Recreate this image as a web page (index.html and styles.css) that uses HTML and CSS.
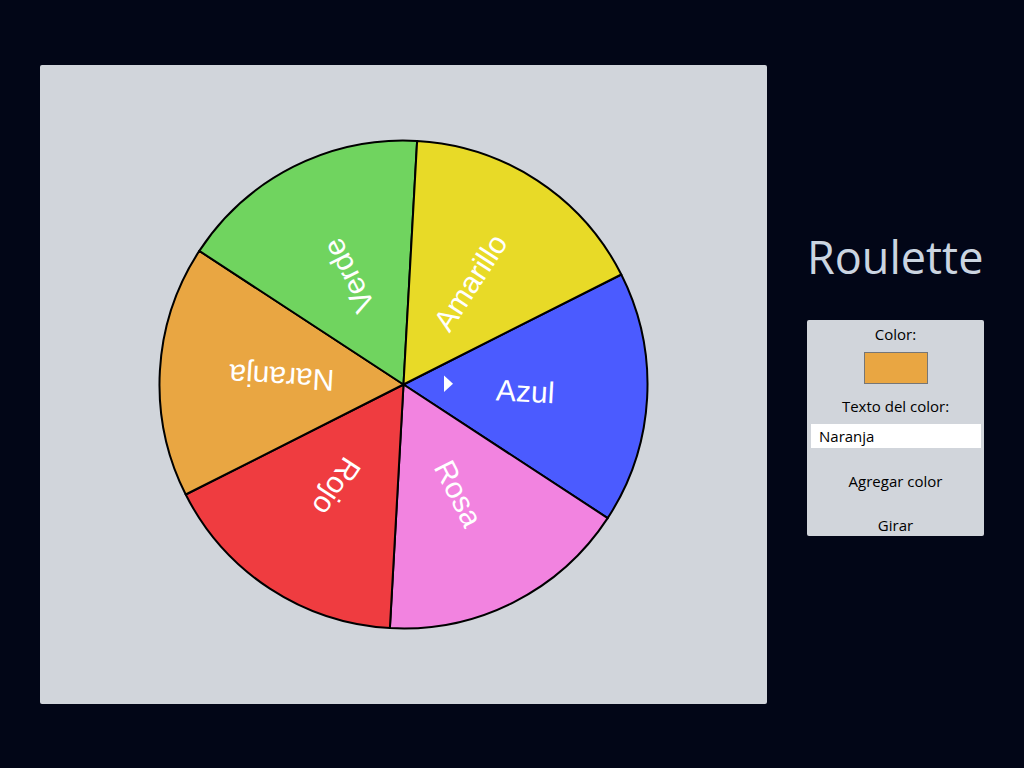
FILE: index.html
```html
<!DOCTYPE html>
<html lang="es">
<head>
<meta charset="utf-8">
<title>Roulette</title>
<link rel="stylesheet" href="styles.css">
</head>
<body>
<main class="app">
  <div class="board">
    <svg class="wheel" width="727" height="639" viewBox="0 0 727 639">
      <g transform="translate(363.5 319.5) rotate(-86.8)">
        <g class="seg" transform="rotate(60)"><path fill="#4b5bff" d="M0 0 L244 0 A244 244 0 0 1 122 211.31 Z"/></g>
        <g class="seg" transform="rotate(120)"><path fill="#f283e0" d="M0 0 L244 0 A244 244 0 0 1 122 211.31 Z"/></g>
        <g class="seg" transform="rotate(180)"><path fill="#ef3c40" d="M0 0 L244 0 A244 244 0 0 1 122 211.31 Z"/></g>
        <g class="seg" transform="rotate(240)"><path fill="#e9a642" d="M0 0 L244 0 A244 244 0 0 1 122 211.31 Z"/></g>
        <g class="seg" transform="rotate(300)"><path fill="#70d45f" d="M0 0 L244 0 A244 244 0 0 1 122 211.31 Z"/></g>
        <g class="seg" transform="rotate(0)"><path fill="#e8da27" d="M0 0 L244 0 A244 244 0 0 1 122 211.31 Z"/></g>
      </g>
      <g transform="translate(363.5 319.5)" class="labels">
        <text transform="rotate(3.2) translate(122 0)">Azul</text>
        <text transform="rotate(63.2) translate(122 0)">Rosa</text>
        <text transform="rotate(123.2) translate(122 0)">Rojo</text>
        <text transform="rotate(183.2) translate(122 0)">Naranja</text>
        <text transform="rotate(243.2) translate(122 0)">Verde</text>
        <text transform="rotate(303.2) translate(122 0)">Amarillo</text>
      </g>
      <polygon class="pointer" points="404,310.5 404,327 413,318.75"/>
    </svg>
  </div>
  <aside class="side">
    <h1 class="title">Roulette</h1>
    <form class="controls">
      <label class="lbl" for="color">Color:</label>
      <span class="swatch" id="color"></span>
      <label class="lbl" for="texto">Texto del color:</label>
      <input class="text-input" id="texto" type="text" value="Naranja">
      <button class="btn" type="button">Agregar color</button>
      <button class="btn" type="button">Girar</button>
    </form>
  </aside>
</main>
</body>
</html>
```
FILE: styles.css
```css
html, body {
  margin: 0;
  padding: 0;
  background: #020617;
}
body {
  width: 1024px;
  height: 768px;
  overflow: hidden;
  font-family: "Open Sans", "Noto Sans", sans-serif;
}
.app {
  display: flex;
  align-items: center;
  gap: 40px;
  padding: 0 40px;
  height: 768px;
  box-sizing: border-box;
}
.board {
  width: 727px;
  height: 639px;
  background: #d1d5db;
  border-radius: 2px;
  flex: none;
}
.wheel {
  display: block;
}
.seg path {
  stroke: #000;
  stroke-width: 2;
  stroke-linejoin: round;
}
.labels text {
  font-family: "Liberation Sans", Arial, sans-serif;
  font-size: 30px;
  fill: #fff;
  text-anchor: middle;
  dominant-baseline: central;
}
.pointer {
  fill: #fff;
}
.side {
  width: 177px;
  flex: none;
  display: flex;
  flex-direction: column;
}
.title {
  margin: 0 0 39px 0;
  font-weight: 400;
  font-size: 45px;
  line-height: 49px;
  color: #cbd5e1;
  text-align: left;
  white-space: nowrap;
}
.controls {
  background: #d1d5db;
  border-radius: 2px;
  display: flex;
  flex-direction: column;
  align-items: center;
  padding: 4px 3px 0;
  height: 216px;
  box-sizing: border-box;
  margin: 0;
}
.lbl {
  font-size: 15px;
  line-height: 20px;
  color: #000;
}
.swatch {
  display: block;
  width: 62px;
  height: 30px;
  background: #e9a642;
  border: 1px solid #767676;
  margin: 8px 0 12px;
}
.text-input {
  align-self: stretch;
  margin: 8px 0 0 1px;
  height: 24px;
  border: none;
  background: #fff;
  font-family: "Open Sans", "Noto Sans", sans-serif;
  font-size: 15px;
  padding: 0 8px;
  color: #000;
  box-sizing: border-box;
  outline: none;
}
.btn {
  background: transparent;
  border: none;
  font-family: "Open Sans", "Noto Sans", sans-serif;
  font-size: 15px;
  line-height: 20px;
  color: #000;
  padding: 0;
  margin-top: 23px;
}
.btn + .btn {
  margin-top: 24px;
}
```
